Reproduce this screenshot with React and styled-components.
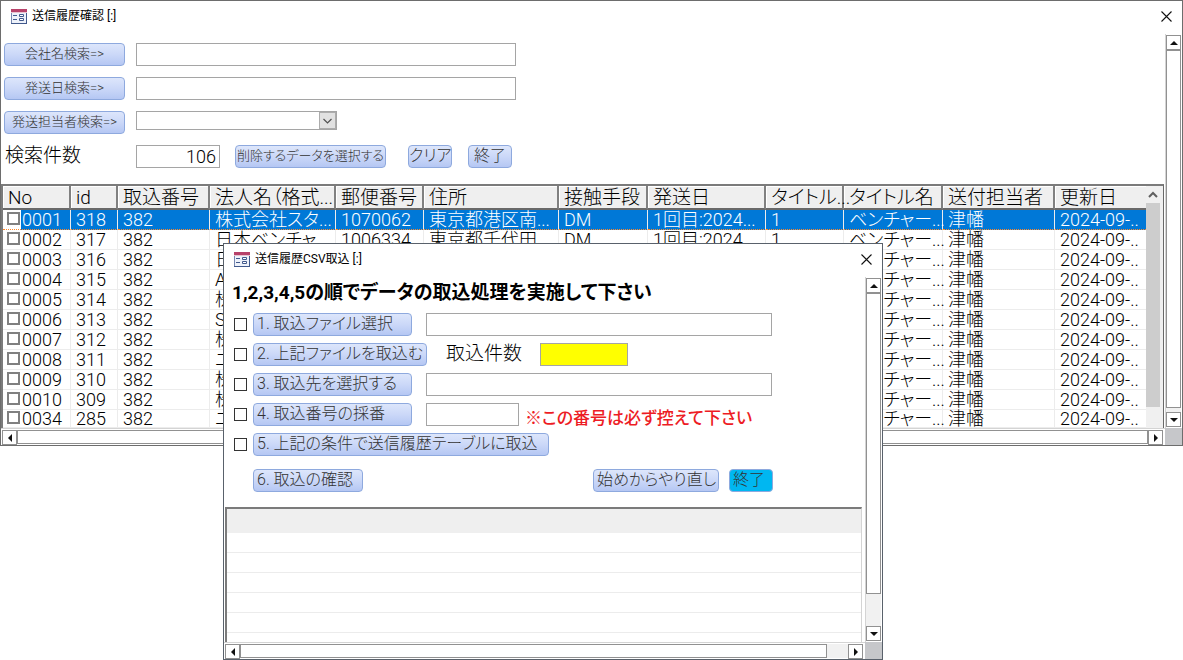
import React, { useState } from "react";
import styled, { createGlobalStyle } from "styled-components";

const columns = [
  { title: "No", width: 68 },
  { title: "id", width: 47 },
  { title: "取込番号", width: 92 },
  { title: "法人名（格式...", width: 126 },
  { title: "郵便番号", width: 88 },
  { title: "住所", width: 135 },
  { title: "接触手段", width: 89 },
  { title: "発送日", width: 118 },
  { title: "タイトル...", width: 78 },
  { title: "タイトル名", width: 99 },
  { title: "送付担当者", width: 112 },
  { title: "更新日" },
];

const rows = [
  ["0001", "318", "株式会社スタ...", "1070062", "東京都港区南..."],
  ["0002", "317", "日本ベンチャ...", "1006334", "東京都千代田..."],
  ["0003", "316", "日"],
  ["0004", "315", "A"],
  ["0005", "314", "株"],
  ["0006", "313", "S"],
  ["0007", "312", "株"],
  ["0008", "311", "ニ"],
  ["0009", "310", "株"],
  ["0010", "309", "株"],
  ["0034", "285", "ニ"],
];

const FormIcon = () => (
  <svg width="16" height="15" viewBox="0 0 16 15" aria-hidden="true">
    <rect x="0.5" y="0.5" width="15" height="14" fill="#eef2fa" stroke="#7687b0" />
    <path d="M0 14.5h16M15.5 3v12" stroke="#41598c" />
    <rect width="16" height="3" fill="#b8426a" />
    <path d="M0 3.5h16" stroke="#e8c3d0" />
    <path d="M2 6.5h4M2 10.5h4" stroke="#41598c" />
    <path d="M8.5 5.5h4v2h-4zM8.5 9.5h4v2h-4z" fill="#fff" stroke="#41598c" />
  </svg>
);

const CloseIcon = () => (
  <svg width="11" height="11" viewBox="0 0 11 11" aria-hidden="true">
    <path d="M0.5 0.5l10 10M10.5 0.5l-10 10" stroke="#111" strokeWidth="1.1" />
  </svg>
);

const arrows = {
  up: "M4 2L8 6H0z",
  down: "M4 6L8 2H0z",
  left: "M2 4L6 0V8z",
  right: "M6 4L2 0V8z",
};

const Arrow = ({ dir }) => (
  <svg width="8" height="8" viewBox="0 0 8 8" aria-hidden="true">
    <path d={arrows[dir]} fill="#111" />
  </svg>
);

const VerticalBar = ({ rest }) => (
  <VBar>
    <BarButton aria-label="上へ">
      <Arrow dir="up" />
    </BarButton>
    <Thumb />
    <Track $size={rest} />
    <BarButton aria-label="下へ">
      <Arrow dir="down" />
    </BarButton>
  </VBar>
);

const HorizontalBar = ({ rest }) => (
  <Bottom>
    <HBar>
      <BarButton aria-label="左へ">
        <Arrow dir="left" />
      </BarButton>
      <Thumb />
      <Track $size={rest} />
      <BarButton aria-label="右へ">
        <Arrow dir="right" />
      </BarButton>
    </HBar>
    <Corner />
  </Bottom>
);

const TitleBar = ({ title }) => (
  <Title>
    <FormIcon />
    <span>{title}</span>
    <Close aria-label="閉じる">
      <CloseIcon />
    </Close>
  </Title>
);

const HistoryTable = () => (
  <TableFrame>
    <TableArea>
      <Table>
        <colgroup>
          {columns.map((c) => (
            <Col key={c.title} $w={c.width} />
          ))}
        </colgroup>
        <thead>
          <tr>
            {columns.map((c) => (
              <th key={c.title}>{c.title}</th>
            ))}
          </tr>
        </thead>
        <tbody>
          {rows.map(([no, id, name, zip, address], i) => (
            <Row key={no} $selected={i === 0}>
              <td>
                <RowLabel>
                  <RowCheck type="checkbox" />
                  <span>{no}</span>
                </RowLabel>
              </td>
              <td>{id}</td>
              <td>382</td>
              <td>{name}</td>
              <td>{zip}</td>
              <td>{address}</td>
              <td>{zip && "DM"}</td>
              <td>{zip && "1回目:2024..."}</td>
              <td>{zip && "1"}</td>
              <td>ベンチャー...</td>
              <td>津幡</td>
              <td>2024-09-..</td>
            </Row>
          ))}
        </tbody>
      </Table>
    </TableArea>
    <ListBar>
      <svg width="14" height="17" viewBox="0 0 14 17" aria-hidden="true">
        <path d="M3 11l4-4 4 4" fill="none" stroke="#606060" strokeWidth="2" />
      </svg>
      <ListThumb />
    </ListBar>
  </TableFrame>
);

const ImportDialog = () => (
  <Dialog role="dialog" aria-label="送信履歴CSV取込">
    <TitleBar title="送信履歴CSV取込 [:]" />
    <Body>
      <Content>
        <Heading>1,2,3,4,5の順でデータの取込処理を実施して下さい</Heading>
        <Step>
          <StepCheck type="checkbox" aria-label="手順1" />
          <StepButton $w={159}>1. 取込ファイル選択</StepButton>
          <TextBox $w={346} aria-label="取込ファイル" />
        </Step>
        <Step>
          <StepCheck type="checkbox" aria-label="手順2" />
          <StepButton $w={174}>2. 上記ファイルを取込む</StepButton>
          <CountLabel htmlFor="imported">取込件数</CountLabel>
          <TextBox id="imported" $w={88} $bg="#ffff00" />
        </Step>
        <Step>
          <StepCheck type="checkbox" aria-label="手順3" />
          <StepButton $w={159}>3. 取込先を選択する</StepButton>
          <TextBox $w={346} aria-label="取込先" />
        </Step>
        <Step>
          <StepCheck type="checkbox" aria-label="手順4" />
          <StepButton $w={159}>4. 取込番号の採番</StepButton>
          <NumberGroup>
            <TextBox $w={93} aria-label="取込番号" />
            <Warning>※この番号は必ず控えて下さい</Warning>
          </NumberGroup>
        </Step>
        <Step>
          <StepCheck type="checkbox" aria-label="手順5" />
          <StepButton $w={296}>5. 上記の条件で送信履歴テーブルに取込</StepButton>
        </Step>
        <Footer>
          <StepButton $w={110}>6. 取込の確認</StepButton>
          <FooterEnd>
            <StepButton $w={126}>始めからやり直し</StepButton>
            <StepButton $w={44} $bg="#00b7f1">
              終了
            </StepButton>
          </FooterEnd>
        </Footer>
        <EmptyList>
          <EmptyHead />
          <EmptyRow />
          <EmptyRow />
          <EmptyRow />
          <EmptyRow />
          <EmptyRow />
        </EmptyList>
      </Content>
      <VerticalBar rest={32} />
    </Body>
    <HorizontalBar rest={21} />
  </Dialog>
);

const App = () => {
  const [count, setCount] = useState("106");

  return (
    <Desktop>
      <GlobalStyle />
      <Window>
        <TitleBar title="送信履歴確認 [:]" />
        <Body>
          <Content>
            <Search>
              <SearchRow>
                <SearchButton>会社名検索=&gt;</SearchButton>
                <TextBox $w={380} aria-label="会社名" />
              </SearchRow>
              <SearchRow>
                <SearchButton>発送日検索=&gt;</SearchButton>
                <TextBox $w={380} aria-label="発送日" />
              </SearchRow>
              <SearchRow>
                <SearchButton>発送担当者検索=&gt;</SearchButton>
                <SelectBox>
                  <select aria-label="発送担当者">
                    <option></option>
                  </select>
                  <svg width="17" height="17" viewBox="0 0 17 17" aria-hidden="true">
                    <rect width="17" height="17" fill="#e1e1e1" />
                    <path d="M0.5 0v17M16.5 0v17M0 0.5h17M0 16.5h17" stroke="#acacac" />
                    <path d="M4.5 7l4 4 4-4" fill="none" stroke="#505050" strokeWidth="1.2" />
                  </svg>
                </SelectBox>
              </SearchRow>
              <SearchRow>
                <SearchLabel htmlFor="count">検索件数</SearchLabel>
                <TextBox
                  id="count"
                  $w={84}
                  value={count}
                  onChange={(e) => setCount(e.target.value)}
                />
                <Actions>
                  <Button $w={151}>削除するデータを選択する</Button>
                  <EndButtons>
                    <Button $w={44} $size={16}>
                      クリア
                    </Button>
                    <Button $w={44} $size={16}>
                      終了
                    </Button>
                  </EndButtons>
                </Actions>
              </SearchRow>
            </Search>
            <HistoryTable />
          </Content>
          <VerticalBar rest={4} />
        </Body>
        <HorizontalBar rest={0} />
      </Window>
      <ImportDialog />
    </Desktop>
  );
};

export default App;

const GlobalStyle = createGlobalStyle`
  * {
    box-sizing: border-box;
  }

  body {
    margin: 0;
    background: white;
    color: #000;
    font-family: Roboto, "Noto Sans CJK JP", sans-serif;
    font-weight: 300;
    font-feature-settings: "palt";
  }

  button, input, select {
    margin: 0;
    font: inherit;
    font-feature-settings: inherit;
  }
`;

const Desktop = styled.div`
  position: relative;
  min-height: 100vh;
  overflow: hidden;
`;

const Window = styled.main`
  display: flex;
  flex-direction: column;
  border: 1px solid #6d6d6d;
  background: white;
`;

const Dialog = styled.section`
  position: absolute;
  top: 243px;
  left: 223px;
  width: 660px;
  display: flex;
  flex-direction: column;
  border: 1px solid #59616b;
  background: white;
`;

const Title = styled.header`
  display: flex;
  align-items: center;
  gap: 5px;
  height: 33px;
  padding: 0 10px 3px 10px;
  font-size: 12px;
  font-weight: 400;
  line-height: 16px;
`;

const Close = styled.button`
  display: flex;
  margin-left: auto;
  padding: 0;
  border: 0;
  background: none;
`;

const Body = styled.div`
  display: flex;
`;

const Content = styled.div`
  flex: 1;
  min-width: 0;
  display: flex;
  flex-direction: column;
`;

const VBar = styled.div`
  display: flex;
  flex-direction: column;
  width: 17px;
  padding: 1px 1px 1px 0;
  border-left: 1px solid #d4d4d4;
`;

const Bottom = styled.div`
  display: flex;
  height: 17px;
`;

const HBar = styled.div`
  flex: 1;
  display: flex;
  padding: 1px 2px 1px 1px;
  border-top: 1px solid #d4d4d4;
`;

const BarButton = styled.button`
  display: flex;
  align-items: center;
  justify-content: center;
  flex: none;
  width: 15px;
  height: 15px;
  padding: 0;
  border: 1px solid #919191;
  background: white;
`;

const Thumb = styled.div`
  flex: 1;
  border: 1px solid #919191;
`;

const Track = styled.div`
  flex: 0 0 ${(props) => props.$size}px;
  background: #f1f1f1;
`;

const Corner = styled.div`
  width: 17px;
  background: #c6c7ca;
`;

const Search = styled.form`
  display: flex;
  flex-direction: column;
  gap: 11px;
  padding: 9px 3px 16px;
`;

const SearchRow = styled.div`
  display: flex;
  gap: 11px;
  height: 23px;
`;

const Button = styled.button.attrs({ type: "button" })`
  width: ${(props) => props.$w}px;
  height: 23px;
  padding: 0 0 2px;
  border: 1px solid #8ea9de;
  border-radius: 4px;
  background: ${(props) =>
    props.$bg || "linear-gradient(#dde6fb, #cbd8f8 50%, #b5c7f3)"};
  color: #333;
  font-size: ${(props) => props.$size || 13}px;
  line-height: 19px;
  white-space: nowrap;
`;

const SearchButton = styled(Button)`
  width: 121px;
`;

const StepButton = styled(Button)`
  padding: 0 3px 1px;
  font-size: 16px;
  line-height: 20px;
  text-align: left;
`;

const TextBox = styled.input`
  width: ${(props) => props.$w}px;
  height: 23px;
  padding: 0 3px;
  border: 1px solid #a5a5a5;
  background: ${(props) => props.$bg || "white"};
  font-size: 18px;
  text-align: right;
`;

const SelectBox = styled.div`
  position: relative;
  width: 201px;
  height: 19px;

  select {
    width: 100%;
    height: 100%;
    border: 1px solid #a5a5a5;
    border-radius: 0;
    background: white;
    appearance: none;
  }

  svg {
    position: absolute;
    top: 1px;
    right: 1px;
    pointer-events: none;
  }
`;

const SearchLabel = styled.label`
  width: 121px;
  padding-left: 1px;
  font-size: 19px;
  line-height: 22px;
`;

const Actions = styled.div`
  display: flex;
  gap: 22px;
  margin-left: 4px;
`;

const EndButtons = styled.div`
  display: flex;
  gap: 16px;
`;

const TableFrame = styled.div`
  display: flex;
  height: 244px;
  margin-right: 1px;
  border-top: 2px solid #7b7b7b;
  border-left: 2px solid #7b7b7b;
  border-right: 1px solid #696969;
`;

const TableArea = styled.div`
  flex: 1;
  min-width: 0;
`;

const Table = styled.table`
  width: 100%;
  table-layout: fixed;
  border-collapse: separate;
  border-spacing: 0;
  text-align: left;
  white-space: nowrap;

  th {
    height: 24px;
    padding: 2px 0 0 5px;
    border-right: 2px solid #808080;
    border-bottom: 2px solid #696969;
    background: #efefef;
    box-shadow: inset 1px 1px white;
    font-size: 19px;
    font-weight: inherit;
    line-height: 20px;
  }

  td {
    height: 20px;
    padding: 0 0 0 5px;
    border-right: 1px solid #ececec;
    border-bottom: 1px solid #ececec;
    font-size: 18px;
    line-height: 19px;
  }

  th:last-child,
  td:last-child {
    border-right: 0;
  }

  td:first-child {
    padding-left: 4px;
  }
`;

const Col = styled.col`
  width: ${(props) => (props.$w ? `${props.$w}px` : "auto")};
`;

const RowLabel = styled.label`
  display: flex;
  align-items: center;
  gap: 2px;
  height: 19px;
`;

const Row = styled.tr`
  color: ${(props) => (props.$selected ? "white" : "black")};

  td {
    background: ${(props) => (props.$selected ? "#0078d7" : "white")};
    ${(props) => props.$selected && "border-bottom: 1px dotted #ff8728;"}
  }

  td:first-child {
    background: ${(props) =>
      props.$selected
        ? "linear-gradient(to right, white 18px, #0078d7 18px)"
        : "white"};
  }

  &:last-child td {
    height: 18px;
    line-height: 17px;
  }

  &:last-child ${RowLabel} {
    height: 17px;
  }
`;

const RowCheck = styled.input`
  appearance: none;
  width: 13px;
  height: 13px;
  margin-bottom: 3px;
  border: 2px solid #808080;
  background: white;
`;

const ListBar = styled.div`
  display: flex;
  flex-direction: column;
  width: 17px;
  padding-right: 3px;
  background: #f0f0f0;
`;

const ListThumb = styled.div`
  height: 204px;
  background: #cdcdcd;
`;

const Heading = styled.h1`
  margin: 0;
  padding-left: 8px;
  font-size: 19px;
  font-weight: 700;
  line-height: 32px;
`;

const Step = styled.div`
  display: flex;
  align-items: center;
  gap: 14px;
  height: 30px;
  padding-left: 10px;
`;

const StepCheck = styled.input`
  appearance: none;
  flex: none;
  width: 13px;
  height: 13px;
  margin-right: -8px;
  border: 1px solid #333;
  background: white;
`;

const CountLabel = styled.label`
  width: 85px;
  padding-left: 5px;
  font-size: 19px;
  line-height: 24px;
`;

const NumberGroup = styled.div`
  display: flex;
  align-items: center;
  gap: 6px;
`;

const Warning = styled.strong`
  padding-top: 4px;
  color: #ed1c24;
  font-size: 17px;
  font-weight: 500;
`;

const Footer = styled.div`
  display: flex;
  align-items: center;
  justify-content: space-between;
  height: 42px;
  margin-bottom: 6px;
  padding: 0 92px 0 29px;
`;

const FooterEnd = styled.div`
  display: flex;
  gap: 10px;
`;

const EmptyList = styled.div`
  height: 135px;
  margin: 0 3px 0 1px;
  border-top: 2px solid #7b7b7b;
  border-left: 2px solid #7b7b7b;
  border-right: 1px solid #d4d4d4;
`;

const EmptyHead = styled.div`
  height: 24px;
  background: #efefef;
`;

const EmptyRow = styled.div`
  height: 20px;
  border-bottom: 1px solid #ececec;
`;
